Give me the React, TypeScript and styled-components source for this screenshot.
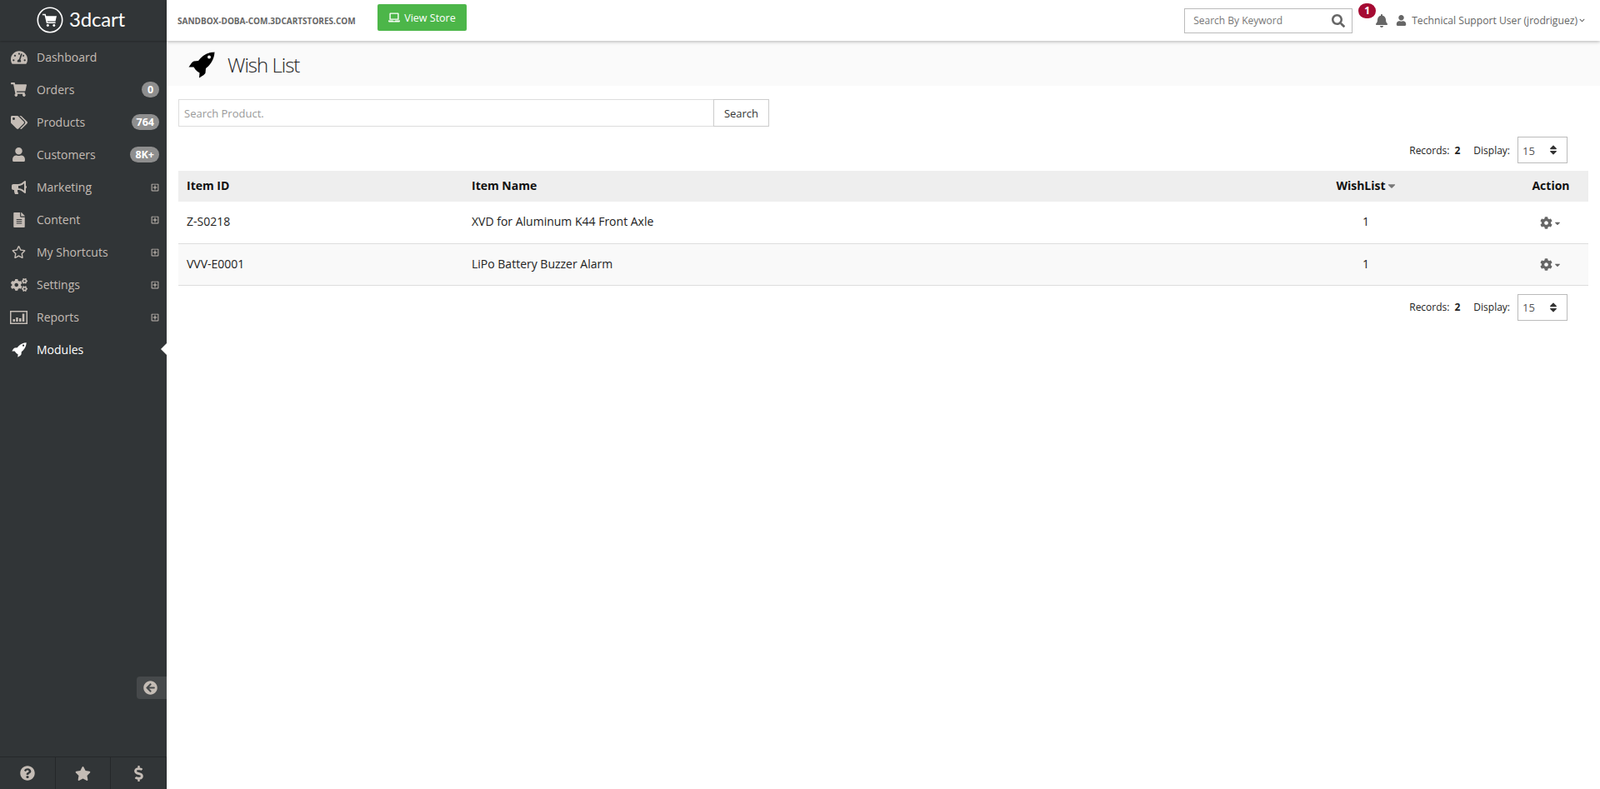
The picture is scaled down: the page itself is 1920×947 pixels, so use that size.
import styled, { createGlobalStyle } from 'styled-components';
import { ReactNode } from 'react';
import {
  FaBell,
  FaBullhorn,
  FaCaretDown,
  FaChevronDown,
  FaCog,
  FaCogs,
  FaDollarSign,
  FaFileAlt,
  FaLaptop,
  FaQuestionCircle,
  FaRegPlusSquare,
  FaRegStar,
  FaSearch,
  FaShoppingCart,
  FaSort,
  FaStar,
  FaTachometerAlt,
  FaTags,
  FaUser,
  FaArrowCircleLeft,
} from 'react-icons/fa';

const GlobalStyle = createGlobalStyle`
  html, body {
    margin: 0;
    padding: 0;
    height: 100%;
    background: #fff;
    overflow: hidden;
    font-family: "Open Sans", "Liberation Sans", sans-serif;
  }
  * { box-sizing: border-box; }
`;

const Page = styled.div`
  display: flex;
  width: 1920px;
  height: 947px;
`;

const Sidebar = styled.aside`
  width: 200px;
  flex: none;
  height: 100%;
  background: #313537;
  display: flex;
  flex-direction: column;
`;

const Brand = styled.div`
  height: 49px;
  flex: none;
  display: flex;
  align-items: center;
  padding-left: 44px;
  gap: 7px;
  box-shadow: 0 1px 2px rgba(0, 0, 0, 0.25);
  svg { flex: none; margin-top: -1px; }
`;

const BrandName = styled.span`
  font-family: "Lato", "Open Sans", sans-serif;
  font-size: 24px;
  font-weight: 400;
  line-height: 1;
  color: #fff;
  letter-spacing: -0.2px;
  margin-top: -4px;
`;

const Nav = styled.nav`
  flex: 1;
  display: flex;
  flex-direction: column;
`;

const NavRow = styled.div<{ $active?: boolean }>`
  position: relative;
  height: 39px;
  display: flex;
  align-items: center;
  font-size: 14px;
  color: ${(p) => (p.$active ? '#fff' : '#c4bcb5')};
  font-weight: ${(p) => (p.$active ? 500 : 400)};
  padding-right: 9px;
  ${(p) =>
    p.$active &&
    `&::after {
      content: '';
      position: absolute;
      right: 0;
      top: 12px;
      border: 7px solid transparent;
      border-left-width: 0;
      border-right-color: #fff;
    }`}
`;

const NavIcon = styled.span`
  width: 44px;
  flex: none;
  display: flex;
  justify-content: center;
  padding-left: 1px;
`;

const NavLabel = styled.span`
  flex: 1;
`;

const Count = styled.span`
  min-width: 21px;
  height: 19px;
  padding: 0 6px;
  border-radius: 10px;
  background: #8e8e8e;
  color: #fff;
  font-size: 12.5px;
  font-weight: 700;
  line-height: 19px;
  text-align: center;
`;

const Expand = styled.span`
  display: flex;
  color: #c4bcb5;
`;

const Collapse = styled.div`
  align-self: flex-end;
  width: 36px;
  height: 27px;
  margin-bottom: 69px;
  background: #46494b;
  border-radius: 4px 0 0 4px;
  display: flex;
  align-items: center;
  justify-content: center;
  padding-right: 4px;
  color: #c4bcb5;
`;

const SideFooter = styled.div`
  flex: none;
  height: 39px;
  display: grid;
  grid-template-columns: 67px 66px 67px;
  border-top: 1px solid #25282a;
`;

const FooterCell = styled.div`
  display: flex;
  align-items: center;
  justify-content: center;
  color: #c4bcb5;
  border-right: 1px solid #25282a;
`;

const Main = styled.div`
  flex: 1;
  min-width: 0;
  display: flex;
  flex-direction: column;
`;

const TopBar = styled.header`
  height: 49px;
  flex: none;
  display: flex;
  align-items: center;
  padding-left: 13px;
  padding-right: 18px;
  background: #fff;
  box-shadow: 0 1px 4px rgba(0, 0, 0, 0.3);
  position: relative;
`;

const Host = styled.span`
  font-size: 10px;
  font-weight: 700;
  color: #666;
  width: 240px;
  flex: none;
  margin-top: 1px;
  white-space: nowrap;
`;

const StoreButton = styled.a`
  width: 107px;
  height: 32px;
  margin-top: -7px;
  background: #4cb649;
  border-radius: 2px;
  color: #fff;
  font-size: 12.5px;
  font-weight: 500;
  display: flex;
  align-items: center;
  justify-content: center;
  gap: 5px;
`;

const TopRight = styled.div`
  margin-left: auto;
  display: flex;
  align-items: center;
`;

const KeywordBox = styled.div`
  width: 202px;
  height: 30px;
  border: 1px solid #bbb;
  display: flex;
  align-items: center;
  padding: 0 8px 0 10px;
  color: #666;
`;

const KeywordInput = styled.input`
  flex: 1;
  min-width: 0;
  border: 0;
  outline: 0;
  padding: 0;
  font: 400 12px "Open Sans", sans-serif;
  &::placeholder { color: #777; opacity: 1; }
`;

const BellWrap = styled.div`
  position: relative;
  margin-left: 27px;
  width: 16px;
  height: 18px;
  color: #666;
  display: flex;
  align-items: center;
`;

const BellBadge = styled.span`
  position: absolute;
  left: -20px;
  top: -12px;
  width: 21px;
  height: 18px;
  border-radius: 9px;
  background: #a50a32;
  color: #fff;
  font-size: 12px;
  font-weight: 700;
  line-height: 18px;
  text-align: center;
`;

const UserMenu = styled.div`
  display: flex;
  align-items: center;
  margin-left: 9px;
  color: #666;
  font-size: 12.15px;
  gap: 6px;
`;

const UserChevron = styled(FaChevronDown)`
  margin-left: -4px;
`;

const TitleBand = styled.div`
  height: 53px;
  flex: none;
  margin-top: 1px;
  padding: 2px 0 0 26px;
  background: #fafafa;
  display: flex;
  align-items: center;
  gap: 15px;
`;

const TitleIcon = styled.span`
  display: flex;
  color: #000;
`;

const PageTitle = styled.h1`
  margin: 0;
  font-size: 24px;
  font-weight: 300;
  letter-spacing: -1px;
  color: #222;
`;

const Content = styled.main`
  padding: 16px 14px 0;
  display: flex;
  flex-direction: column;
`;

const SearchRow = styled.form`
  display: flex;
  width: 709px;
  height: 33px;
`;

const SearchInput = styled.input`
  flex: 1;
  border: 1px solid #ddd;
  border-right: 0;
  outline: 0;
  padding: 0 6px;
  font: 400 13px "Open Sans", sans-serif;
  &::placeholder { color: #999; opacity: 1; }
`;

const SearchButton = styled.button`
  width: 67px;
  border: 1px solid #ccc;
  background: #fff;
  color: #333;
  padding: 0;
  font: 400 13px "Open Sans", sans-serif;
`;

const Pager = styled.div<{ $top?: boolean }>`
  display: flex;
  align-items: center;
  justify-content: flex-end;
  height: 32px;
  margin: ${(p) => (p.$top ? '12px 0 9px' : '10px 0 0')};
  padding-right: 25px;
  font-size: 12px;
  color: #222;
`;

const PagerLabel = styled.span`
  margin-right: 6px;
`;

const PagerValue = styled.b`
  margin-right: 16px;
`;

const SelectWrap = styled.div`
  position: relative;
  width: 60px;
  height: 32px;
  margin-left: 3px;
  color: #333;
  svg {
    position: absolute;
    right: 10px;
    top: 9px;
    pointer-events: none;
  }
`;

const PageSelect = styled.select`
  width: 100%;
  height: 100%;
  appearance: none;
  border: 1px solid #bbb;
  border-radius: 0;
  background: #fff;
  padding: 1px 0 0 5px;
  color: #555;
  font: 400 13px "Open Sans", sans-serif;
`;

const Table = styled.table`
  width: 100%;
  border-collapse: collapse;
  table-layout: fixed;
  font-size: 14px;
  color: #222;
`;

const Th = styled.th<{ $w?: number; $align?: string }>`
  width: ${(p) => (p.$w ? `${p.$w}px` : 'auto')};
  height: 37px;
  padding: 0 10px 2px;
  background: #eee;
  color: #111;
  font-weight: 700;
  text-align: ${(p) => p.$align || 'left'};
`;

const WishListTh = styled(Th)`
  padding-left: 12px;
`;

const Tr = styled.tr<{ $alt?: boolean }>`
  background: ${(p) => (p.$alt ? '#f9f9f9' : '#fff')};
  border-bottom: 1px solid #ddd;
`;

const Td = styled.td<{ $align?: string }>`
  height: 50px;
  padding: 0 10px 2px;
  text-align: ${(p) => p.$align || 'left'};
`;

const SortCaret = styled(FaCaretDown)`
  color: #777;
  vertical-align: -2px;
`;

const ActionMenu = styled.span`
  display: inline-flex;
  align-items: center;
  vertical-align: middle;
  color: #666;
  gap: 1px;
`;

const CartLogo = () => (
  <svg width="32" height="32" viewBox="0 0 30 30" fill="none">
    <circle cx="15" cy="15" r="13.8" stroke="#fff" strokeWidth="1.5" />
    <path d="M6.5 9h3l2.2 9h9.5" stroke="#fff" strokeWidth="1.4" />
    <path d="M10 10.5h12.5l-1.4 6H11.4z" fill="#fff" />
    <circle cx="12.5" cy="21" r="1.4" fill="#fff" />
    <circle cx="19.5" cy="21" r="1.4" fill="#fff" />
  </svg>
);

const RocketIcon = ({ size }: { size: number }) => (
  <svg width={size} height={size} viewBox="0 0 32 32" fill="currentColor">
    <path
      fillRule="evenodd"
      d="M31.5.5C25 .8 19 3.500 14.500 8L12 11l-5.500.5c-1 .5-1.500 1-2.500 2L.5 18.500h6l2 3 2 2 3 2-.5 6 5.500-3.500c1-1 1.500-1.500 2-2.500L21 20l3-2.500C28.500 13 31.200 7 31.500.5zM25 4.500a2 2 0 1 1 0 4 2 2 0 0 1 0-4z"
    />
  </svg>
);

const ReportsIcon = () => (
  <svg width="21" height="16" viewBox="0 0 21 16" fill="currentColor">
    <path fillRule="evenodd" d="M0 0h21v16H0zM1.500 1.500v13h18v-13z" />
    <path d="M3.500 10h2.500v3H3.500zM7.200 8h2.500v5H7.200zM11 9h2.500v4H11zM14.800 3.500h2.500V13h-2.500z" />
  </svg>
);

type NavItem = { label: string; icon: ReactNode; count?: string; expand?: boolean; active?: boolean };

const navItems: NavItem[] = [
  { label: 'Dashboard', icon: <FaTachometerAlt size={20} /> },
  { label: 'Orders', icon: <FaShoppingCart size={19} />, count: '0' },
  { label: 'Products', icon: <FaTags size={20} />, count: '764' },
  { label: 'Customers', icon: <FaUser size={17} />, count: '8K+' },
  { label: 'Marketing', icon: <FaBullhorn size={18} />, expand: true },
  { label: 'Content', icon: <FaFileAlt size={18} />, expand: true },
  { label: 'My Shortcuts', icon: <FaRegStar size={17} />, expand: true },
  { label: 'Settings', icon: <FaCogs size={20} />, expand: true },
  { label: 'Reports', icon: <ReportsIcon />, expand: true },
  { label: 'Modules', icon: <RocketIcon size={18} />, active: true },
];

const products = [
  { id: 'Z-S0218', name: 'XVD for Aluminum K44 Front Axle', count: 1 },
  { id: 'VVV-E0001', name: 'LiPo Battery Buzzer Alarm', count: 1 },
];

const RecordsBar = ({ top }: { top?: boolean }) => (
  <Pager $top={top}>
    <PagerLabel>Records:</PagerLabel>
    <PagerValue>2</PagerValue>
    <PagerLabel>Display:</PagerLabel>
    <SelectWrap>
      <PageSelect defaultValue="15">
        <option>15</option>
        <option>30</option>
        <option>50</option>
      </PageSelect>
      <FaSort size={14} />
    </SelectWrap>
  </Pager>
);

const App = () => (
  <Page>
    <GlobalStyle />
    <Sidebar>
      <Brand>
        <CartLogo />
        <BrandName>3dcart</BrandName>
      </Brand>
      <Nav>
        {navItems.map((item) => (
          <NavRow key={item.label} $active={item.active}>
            <NavIcon>{item.icon}</NavIcon>
            <NavLabel>{item.label}</NavLabel>
            {item.count && <Count>{item.count}</Count>}
            {item.expand && (
              <Expand>
                <FaRegPlusSquare size={10} />
              </Expand>
            )}
          </NavRow>
        ))}
      </Nav>
      <Collapse>
        <FaArrowCircleLeft size={17} />
      </Collapse>
      <SideFooter>
        <FooterCell>
          <FaQuestionCircle size={18} />
        </FooterCell>
        <FooterCell>
          <FaStar size={19} />
        </FooterCell>
        <FooterCell>
          <FaDollarSign size={19} />
        </FooterCell>
      </SideFooter>
    </Sidebar>
    <Main>
      <TopBar>
        <Host>SANDBOX-DOBA-COM.3DCARTSTORES.COM</Host>
        <StoreButton>
          <FaLaptop size={14} />
          View Store
        </StoreButton>
        <TopRight>
          <KeywordBox>
            <KeywordInput placeholder="Search By Keyword" />
            <FaSearch size={16} />
          </KeywordBox>
          <BellWrap>
            <FaBell size={16} />
            <BellBadge>1</BellBadge>
          </BellWrap>
          <UserMenu>
            <FaUser size={13} />
            Technical Support User (jrodriguez)
            <UserChevron size={7} />
          </UserMenu>
        </TopRight>
      </TopBar>
      <TitleBand>
        <TitleIcon>
          <RocketIcon size={32} />
        </TitleIcon>
        <PageTitle>Wish List</PageTitle>
      </TitleBand>
      <Content>
        <SearchRow>
          <SearchInput placeholder="Search Product." />
          <SearchButton type="button">Search</SearchButton>
        </SearchRow>
        <RecordsBar top />
        <Table>
          <thead>
            <tr>
              <Th $w={342}>Item ID</Th>
              <Th>Item Name</Th>
              <WishListTh $w={354} $align="center">
                WishList
                <SortCaret size={14} />
              </WishListTh>
              <Th $w={90} $align="center">
                Action
              </Th>
            </tr>
          </thead>
          <tbody>
            {products.map((p, i) => (
              <Tr key={p.id} $alt={i % 2 === 1}>
                <Td>{p.id}</Td>
                <Td>{p.name}</Td>
                <Td $align="center">{p.count}</Td>
                <Td $align="center">
                  <ActionMenu>
                    <FaCog size={15} />
                    <FaCaretDown size={10} />
                  </ActionMenu>
                </Td>
              </Tr>
            ))}
          </tbody>
        </Table>
        <RecordsBar />
      </Content>
    </Main>
  </Page>
);

export default App;
